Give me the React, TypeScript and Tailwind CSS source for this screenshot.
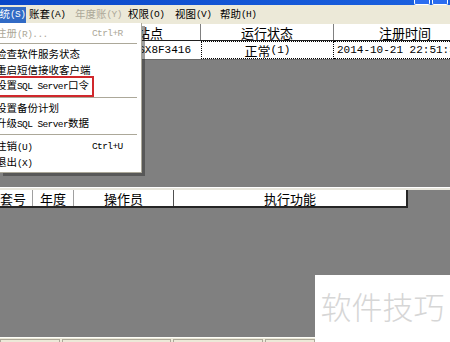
import React from "react";

const CJK = '"Noto Sans CJK SC", "Noto Sans", sans-serif';
const MONO = '"Liberation Mono", "DejaVu Sans Mono", monospace';

function Mixed({ text, latinClass }: { text: string; latinClass: string }) {
  const parts = text.split(/([\x00-\x7F]+)/).filter((p) => p.length > 0);
  return (
    <>
      {parts.map((p, i) =>
        /^[\x00-\x7F]+$/.test(p) ? (
          <span key={i} className={latinClass} style={{ fontFamily: MONO }}>
            {p}
          </span>
        ) : (
          <span key={i}>{p}</span>
        )
      )}
    </>
  );
}

type Item =
  | { sep: true; h: string }
  | { sep?: false; t: string; k?: string; dis?: boolean; red?: boolean; h: string };

const items: Item[] = [
  { t: "注册(R)...", k: "Ctrl+R", dis: true, h: "h-[15px]" },
  { sep: true, h: "h-[6px] pt-[2px]" },
  { t: "检查软件服务状态", h: "h-[15px]" },
  { t: "重启短信接收客户端", h: "h-[16px]" },
  { t: "设置SQL Server口令", red: true, h: "h-[15px]" },
  { sep: true, h: "h-[8px] pt-[4px]" },
  { t: "设置备份计划", h: "h-[15px]" },
  { t: "升级SQL Server数据", h: "h-[15px]" },
  { sep: true, h: "h-[8px] pt-[3px]" },
  { t: "注销(U)", k: "Ctrl+U", h: "h-[16px]" },
  { t: "退出(X)", h: "h-[15px]" },
];

function MenuBarItem({ label, w, active, dis }: { label: string; w: string; active?: boolean; dis?: boolean }) {
  return (
    <div
      className={`${w} h-[16px] flex items-center shrink-0 whitespace-nowrap ${
        active ? "bg-[#316ac5] text-white pl-[2px]" : dis ? "text-[#aca899]" : "text-black"
      }`}
    >
      <Mixed text={label} latinClass="text-[9.5px] tracking-[-0.6px]" />
    </div>
  );
}

export default function App() {
  return (
    <div
      className="relative w-[450px] h-[342px] overflow-hidden bg-[#808080] flex flex-col"
      style={{ fontFamily: CJK }}
    >
      {/* title bar */}
      <div className="h-[5px] shrink-0 bg-gradient-to-r from-[#0a47c8] to-[#1c62e0] flex justify-end pr-[2px]">
        <div className="w-[16px] h-[5px] border-x border-b border-white bg-[#2b6df0] rounded-b-[2px]" />
        <div className="w-[16px] h-[5px] ml-[2px] border-x border-b border-white bg-[#2b6df0] rounded-b-[2px]" />
      </div>

      {/* menu bar */}
      <div className="h-[19px] shrink-0 bg-[#ece9d8] flex items-center text-[10.5px] leading-none">
        <MenuBarItem label="系统(S)" w="w-[39px] ml-[-13px]" active />
        <div className="w-[3px] shrink-0" />
        <MenuBarItem label="账套(A)" w="w-[46px]" />
        <MenuBarItem label="年度账(Y)" w="w-[53px]" dis />
        <MenuBarItem label="权限(O)" w="w-[47px]" />
        <MenuBarItem label="视图(V)" w="w-[45px]" />
        <MenuBarItem label="帮助(H)" w="w-[45px]" />
      </div>

      {/* top grid */}
      <div className="shrink-0 bg-white">
        <div className="flex h-[17px] border-b border-[#202020] text-[13px] leading-none">
          <div className="w-[100px] shrink-0 border-r border-[#a0a0a0]" />
          <div className="w-[101px] shrink-0 border-r border-[#808080] flex items-center justify-center">站点</div>
          <div className="w-[133px] shrink-0 border-r border-[#808080] flex items-center justify-center">运行状态</div>
          <div className="w-[142px] shrink-0 flex items-center justify-center">注册时间</div>
        </div>
        <div className="flex h-[18px] text-[13px] leading-none">
          <div className="w-[100px] shrink-0" />
          <div className="w-[101px] shrink-0 flex items-center justify-end pr-[10px]">
            <span className="text-[11px]" style={{ fontFamily: MONO }}>SX8F3416</span>
          </div>
          <div className="w-[133px] shrink-0 border border-dotted border-black flex items-center justify-center">
            <Mixed text="正常(1)" latinClass="text-[11px]" />
          </div>
          <div className="w-[150px] shrink-0 flex items-center pl-[3px] whitespace-nowrap border-t border-b border-dotted border-black">
            <span className="text-[11px]" style={{ fontFamily: MONO }}>2014-10-21 22:51:36</span>
          </div>
        </div>
      </div>

      {/* grey area */}
      <div className="h-[128px] shrink-0 border-t border-[#6a6a6a]" />

      {/* splitter */}
      <div className="h-[3px] shrink-0 bg-[#e8e6dc] border-t border-white" />

      {/* bottom grid header */}
      <div className="shrink-0 flex">
        <div className="flex h-[18px] w-[414px] ml-[-6px] bg-white border-b-2 border-r-2 border-[#262626] text-[13px] leading-none">
          <div className="w-[39px] shrink-0 border-r border-[#a0a0a0] flex items-center justify-center">套号</div>
          <div className="w-[41px] shrink-0 border-r border-[#a0a0a0] flex items-center justify-center">年度</div>
          <div className="w-[100px] shrink-0 border-r border-[#505050] flex items-center justify-center">操作员</div>
          <div className="flex-1 flex items-center justify-center">执行功能</div>
        </div>
      </div>

      {/* grey area */}
      <div className="flex-1" />

      {/* status bar */}
      <div className="h-[5px] shrink-0 bg-[#ece9d8] border-t border-[#fdfdf8] flex gap-[2px] pt-[1px]">
        <div className="w-[60px] border-t border-l border-r border-[#aca899]" />
        <div className="w-[109px] border-t border-l border-r border-[#aca899]" />
        <div className="w-[90px] border-t border-l border-r border-[#aca899]" />
        <div className="w-[50px] border-t border-l border-r border-[#aca899]" />
      </div>

      {/* dropdown menu */}
      <div className="absolute left-0 top-[23px] w-[142px] bg-white border-r border-b border-[#aca899] pt-[3px] pb-[2px] shadow-[3px_3px_0_rgba(40,40,40,0.45)] text-[10.5px] leading-none">
        {items.map((it, i) =>
          it.sep ? (
            <div key={i} className={it.h}>
              <div className="h-px w-[137px] bg-[#aca899]" />
            </div>
          ) : (
            <div
              key={i}
              className={`relative ${it.h} flex items-center ml-[-4px] whitespace-nowrap ${it.dis ? "text-[#aca899]" : "text-black"}`}
            >
              <span className="w-[96px] shrink-0">
                <Mixed text={it.t} latinClass="text-[9.5px] tracking-[-0.6px]" />
              </span>
              {it.k && (
                <span
                  className={`text-[9.5px] tracking-[-0.6px] ${it.dis ? "text-[#aca899]" : "text-black"}`}
                  style={{ fontFamily: MONO }}
                >
                  {it.k}
                </span>
              )}
              {it.red && (
                <div className="absolute left-[1px] top-[-2px] w-[97px] h-[21px] border-2 border-[#d0282c]" />
              )}
            </div>
          )
        )}
      </div>

      {/* watermark */}
      <div className="absolute left-[315px] top-[275px] w-[135px] h-[67px] bg-white flex items-start justify-center pt-[15px]">
        <span className="text-[31px] leading-none text-[#d6d6d6] font-light">软件技巧</span>
      </div>
    </div>
  );
}
